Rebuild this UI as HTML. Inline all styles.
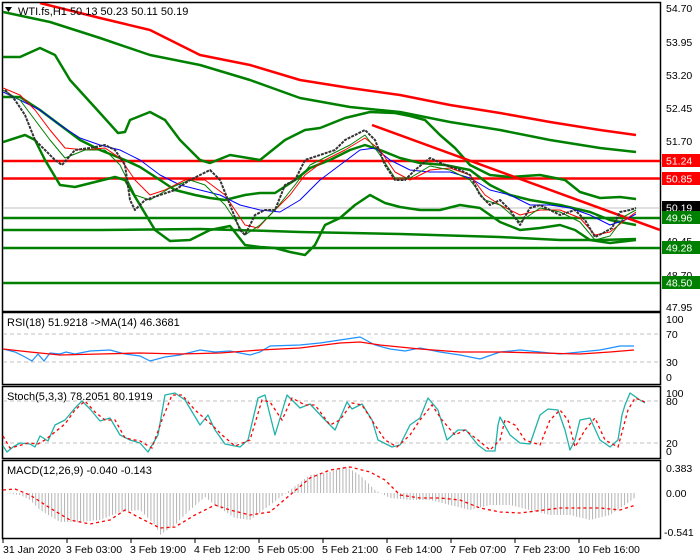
<!DOCTYPE html>
<html><head><meta charset="utf-8"><style>
html,body{margin:0;padding:0;background:#fff;}
svg{display:block;font-family:"Liberation Sans",sans-serif;}
</style></head><body>
<svg width="700" height="560" viewBox="0 0 700 560" xmlns="http://www.w3.org/2000/svg">
<defs>
<pattern id="hs" width="3.2" height="10" patternUnits="userSpaceOnUse"><rect x="0" y="0" width="1" height="10" fill="#b4b4b4"/></pattern>
<clipPath id="cm"><rect x="3" y="3" width="657" height="308"/></clipPath>
</defs>
<rect width="700" height="560" fill="#fff"/>
<g fill="none" stroke="#000" stroke-width="1.5">
<rect x="2.5" y="2.5" width="658" height="309"/>
<rect x="2.5" y="312.5" width="658" height="72"/>
<rect x="2.5" y="386.5" width="658" height="72"/>
<rect x="2.5" y="460.5" width="658" height="78"/>
</g>
<g clip-path="url(#cm)">
<line x1="3" y1="208" x2="660" y2="208" stroke="#c0c0c0" stroke-width="1"/>
<g stroke-width="2.5">
<line x1="3" y1="161" x2="660" y2="161" stroke="#f00"/>
<line x1="3" y1="178.5" x2="660" y2="178.5" stroke="#f00"/>
<line x1="3" y1="218" x2="660" y2="218" stroke="#008000"/>
<line x1="3" y1="248" x2="660" y2="248" stroke="#008000"/>
<line x1="3" y1="283" x2="660" y2="283" stroke="#008000"/>
</g>
<g fill="none" stroke-width="2.5" stroke-linejoin="round">
<polyline stroke="#f00" points="40,3 100,18 150,30 200,55 250,65 300,80 350,88 400,95 450,105 500,113 550,122 600,130 636,135"/>
<polyline stroke="#008000" points="3,12 50,22 100,38 150,55 200,65 250,80 300,98 350,107 400,112 450,122 500,130 550,140 600,148 636,152"/>
<polyline stroke="#008000" points="3,57 20,57 40,48 55,55 70,80 100,113 118,133 125,132 130,120 150,112 165,120 180,140 200,160 210,163 230,155 260,160 285,140 305,130 320,128 345,118 370,112 395,113 410,116 425,120 440,135 455,148 470,165 490,175 510,177 540,175 565,180 580,192 600,198 620,197 636,199"/>
<polyline stroke="#008000" points="3,97 20,97 40,110 60,125 80,140 100,150 125,160 140,167 160,180 175,190 195,195 210,198 225,200 245,195 260,193 275,193 295,180 310,168 330,160 350,150 365,145 380,150 400,158 420,163 445,165 470,170 490,185 510,195 530,200 560,205 590,212 610,220 636,225"/>
<polyline stroke="#008000" points="3,142 25,135 35,140 45,160 60,185 75,187 95,182 115,177 125,180 140,205 155,230 170,241 190,240 210,230 230,226 245,245 260,247 275,248 290,252 305,255 315,245 325,225 340,218 355,205 370,195 385,203 400,207 420,210 440,210 460,205 480,208 500,222 520,230 540,228 560,225 575,230 590,240 610,243 636,240"/>
<polyline stroke="#008000" points="3,230 100,230 200,229 270,231 300,232 400,234 500,237 560,240 600,240 636,239"/>
<line x1="372" y1="125" x2="660" y2="230" stroke="#f00" stroke-width="2.5"/>
</g>
<g fill="none" stroke-width="1" stroke-linejoin="round">
<polyline stroke="#00f" points="3,92 20,100 40,110 60,125 80,138 100,145 120,150 140,160 160,175 180,185 200,190 220,195 240,205 260,210 280,212 300,200 320,180 340,165 360,150 375,148 390,160 410,170 430,172 450,172 470,178 490,190 510,195 530,205 550,205 570,208 590,215 610,225 625,220 636,214"/>
<polyline stroke="#f00" points="3,88 20,95 35,110 50,130 65,148 85,150 105,148 120,158 135,180 150,195 165,190 185,180 205,180 225,195 245,225 258,228 270,215 290,195 305,175 325,160 345,150 365,138 380,150 395,172 410,180 430,170 450,168 470,175 485,195 500,205 520,215 540,210 560,210 580,218 595,235 610,232 625,220 636,212"/>
<polyline stroke="#008000" points="3,90 20,100 35,120 50,140 65,158 85,150 105,150 120,165 135,195 150,200 170,188 190,180 205,185 225,205 245,235 260,225 275,210 295,185 310,165 330,155 350,145 365,135 380,155 395,178 410,178 430,166 450,170 470,180 485,200 500,205 520,222 540,208 560,212 580,222 595,240 610,236 625,216 636,210"/>
</g>
<polyline fill="none" stroke="#333" stroke-width="2" stroke-linejoin="round" stroke-dasharray="3 1" points="5,90 15,100 25,115 35,140 45,150 55,160 62,165 75,150 90,148 105,145 115,150 125,165 130,200 135,210 145,200 160,195 175,190 190,180 200,175 210,170 220,180 230,205 240,230 245,235 255,215 265,210 275,210 285,185 295,180 305,160 320,155 335,150 345,140 355,135 365,130 375,140 385,165 395,180 405,180 415,170 430,158 445,165 460,170 470,175 480,195 490,205 500,200 510,210 520,225 530,208 540,205 550,210 560,215 575,210 585,220 595,237 605,232 612,228 620,212 630,210 636,208"/>
</g>
<g stroke="#c0c0c0" stroke-dasharray="4 3" stroke-width="1"><line x1="3" y1="334" x2="660" y2="334"/><line x1="3" y1="362" x2="660" y2="362"/></g>
<polyline fill="none" stroke="#1e90ff" stroke-width="1.2" points="3,349 15,352 25,357 32,361 38,354 44,361 50,353 60,354 66,352 75,354 90,351 110,350 125,354 140,356 150,361 165,357 180,355 200,350 215,352 230,351 250,355 260,352 270,346 300,345 320,343 340,340 360,337 375,345 390,349 405,351 420,348 440,352 460,355 480,359 500,352 520,350 540,352 560,354 580,352 600,350 620,346 634,346"/>
<polyline fill="none" stroke="#f00" stroke-width="1.3" points="3,349 30,352 60,355 100,354 140,353 180,354 220,353 260,350 300,348 340,343 360,342 380,345 420,349 460,352 500,352 540,353 580,354 610,352 634,350"/>
<g stroke="#c0c0c0" stroke-dasharray="4 3" stroke-width="1"><line x1="3" y1="401" x2="660" y2="401"/><line x1="3" y1="443" x2="660" y2="443"/></g>
<polyline fill="none" stroke="#20b2aa" stroke-width="1.3" stroke-linejoin="round" points="3,446 7,452 13,447 20,443 30,444 35,447 40,436 48,441 55,425 65,420 75,408 82,401 90,409 100,421 110,418 120,435 130,440 140,443 148,452 158,435 165,395 175,393 185,400 200,425 208,415 215,430 225,444 240,447 248,440 258,398 265,395 275,435 287,395 300,408 310,404 325,420 335,430 347,402 352,409 362,404 372,420 378,440 392,447 400,445 410,425 420,418 428,398 438,410 447,440 458,430 466,430 478,445 486,451 495,451 498,425 500,417 510,435 520,443 530,444 540,415 548,409 558,410 565,430 570,450 575,440 580,420 590,418 600,440 610,447 618,440 622,415 625,405 630,393 640,400 645,403"/>
<polyline fill="none" stroke="#f00" stroke-width="1.3" stroke-dasharray="3 3" points="3,436 10,448 18,446 28,443 38,444 45,440 55,432 65,424 75,410 85,401 95,412 105,420 115,420 125,438 140,441 152,448 162,420 172,395 182,395 195,410 212,425 222,435 235,446 250,440 262,400 270,402 282,420 292,398 305,405 315,405 330,425 340,420 352,403 362,405 375,425 385,440 397,447 410,435 420,420 432,405 442,420 455,435 465,430 478,440 490,450 500,440 505,420 515,425 525,440 540,445 550,420 560,410 568,420 575,447 585,430 595,418 605,440 618,447 628,410 635,398 645,402"/>
<polygon fill="url(#hs)" points="5,493 20,495 30,500 40,510 60,522 80,522 100,520 120,512 140,510 155,525 160,535 175,525 190,510 205,497 215,505 235,518 250,520 270,505 290,490 310,475 330,472 345,466 360,475 375,490 390,498 410,500 430,500 450,505 470,510 490,505 510,505 530,510 550,515 570,515 590,520 610,515 625,505 636,497 636,493"/>
<polyline fill="none" stroke="#f00" stroke-width="1.3" stroke-dasharray="3 3" points="3,490 15,489 30,495 50,508 70,520 90,524 110,520 125,510 140,518 160,528 175,527 195,515 215,505 230,510 250,515 270,512 290,495 310,478 330,470 350,467 370,472 385,480 400,495 420,498 440,498 460,500 480,508 500,512 520,513 560,508 600,508 620,510 636,505"/>
<polygon points="5,7 12,7 8.5,12" fill="#000"/>
<text x="18" y="15" font-size="11" fill="#000">WTI.fs,H1  50.13 50.23 50.11 50.19</text>
<text x="7" y="326" font-size="11" fill="#000">RSI(18) 51.9218  -&gt;MA(14) 46.3681</text>
<text x="7" y="400" font-size="11" fill="#000">Stoch(5,3,3) 78.2051 80.1919</text>
<text x="7" y="474" font-size="11" fill="#000">MACD(12,26,9) -0.040 -0.143</text>
<g font-size="10.5" fill="#000">
<text x="666" y="12">54.70</text><text x="666" y="46">53.95</text><text x="666" y="79">53.20</text><text x="666" y="112">52.45</text><text x="666" y="145">51.70</text><text x="666" y="245">49.45</text><text x="666" y="279">48.70</text><text x="666" y="311">47.95</text>
<text x="666" y="323">100</text><text x="666" y="338">70</text><text x="666" y="366">30</text><text x="666" y="381">0</text>
<text x="666" y="397">100</text><text x="666" y="405">80</text><text x="666" y="447">20</text><text x="666" y="455">0</text>
<text x="666" y="472">0.383</text><text x="666" y="497">0.00</text><text x="664" y="536">-0.541</text>
</g>
<g font-size="10.5">
<rect x="662" y="154" width="38" height="13" fill="#f00"/><text x="666" y="164.5" fill="#fff">51.24</text>
<rect x="662" y="172" width="38" height="13" fill="#f00"/><text x="666" y="182.5" fill="#fff">50.85</text>
<rect x="662" y="201" width="38" height="13" fill="#000"/><text x="666" y="211.5" fill="#fff">50.19</text>
<rect x="662" y="211" width="38" height="13" fill="#008000"/><text x="666" y="221.5" fill="#fff">49.96</text>
<rect x="662" y="241" width="38" height="13" fill="#008000"/><text x="666" y="251.5" fill="#fff">49.28</text>
<rect x="662" y="276" width="38" height="13" fill="#008000"/><text x="666" y="286.5" fill="#fff">48.50</text>
</g>
<g stroke="#000" stroke-width="1">
<line x1="3" y1="539" x2="3" y2="543"/><line x1="67" y1="539" x2="67" y2="543"/><line x1="131" y1="539" x2="131" y2="543"/><line x1="195" y1="539" x2="195" y2="543"/><line x1="259" y1="539" x2="259" y2="543"/><line x1="323" y1="539" x2="323" y2="543"/><line x1="387" y1="539" x2="387" y2="543"/><line x1="451" y1="539" x2="451" y2="543"/><line x1="515" y1="539" x2="515" y2="543"/><line x1="579" y1="539" x2="579" y2="543"/>
</g>
<g font-size="10.5" fill="#000">
<text x="3" y="553">31 Jan 2020</text><text x="66" y="553">3 Feb 03:00</text><text x="130" y="553">3 Feb 19:00</text><text x="194" y="553">4 Feb 12:00</text><text x="258" y="553">5 Feb 05:00</text><text x="322" y="553">5 Feb 21:00</text><text x="386" y="553">6 Feb 14:00</text><text x="450" y="553">7 Feb 07:00</text><text x="514" y="553">7 Feb 23:00</text><text x="578" y="553">10 Feb 16:00</text>
</g>
</svg>
</body></html>
